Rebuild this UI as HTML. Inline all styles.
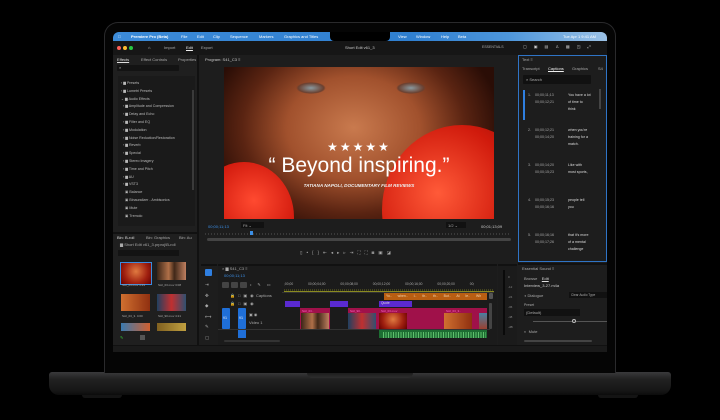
<!DOCTYPE html>
<html><head><meta charset="utf-8"><style>
*{margin:0;padding:0;box-sizing:border-box}
body{width:720px;height:420px;background:#000;position:relative;overflow:hidden;font-family:"Liberation Sans",sans-serif;color:#bbb}
.a{position:absolute}
.t{position:absolute;font-size:4px;color:#aaa;white-space:nowrap;line-height:1}
</style></head><body>
<!-- base -->
<div class="a" style="left:49px;top:372px;width:622px;height:23px;border-radius:3px 3px 10px 10px;background:linear-gradient(#3a3a3c,#222 30%,#161616 80%,#0c0c0c);"></div>
<div class="a" style="left:307px;top:372px;width:106px;height:6px;border-radius:0 0 5px 5px;background:linear-gradient(#1a1a1a,#2e2e2e)"></div>
<div class="a" style="left:82px;top:395px;width:40px;height:3px;background:#141414;border-radius:0 0 3px 3px"></div>
<div class="a" style="left:598px;top:395px;width:40px;height:3px;background:#141414;border-radius:0 0 3px 3px"></div>
<!-- lid -->
<div class="a" style="left:104px;top:22px;width:512px;height:351px;border-radius:14px 14px 0 0;background:#050505;border:1.5px solid #2a2a2c;border-bottom:none"></div>
<!-- screen -->
<div class="a" style="left:113px;top:32px;width:494px;height:320px;background:#1d1d1d;border-radius:6px 6px 0 0;overflow:hidden">
 <!-- menubar -->
 <div class="a" style="left:0;top:0;width:494px;height:9px;background:linear-gradient(90deg,#3c8bd8,#2f7fd0 60%,#4d96db 80%,#9cc2e6)"></div>
 <div class="a" style="left:217px;top:0;width:60px;height:9px;background:#000;border-radius:0 0 4px 4px"></div>
 <div class="t" style="left:5px;top:2.5px;color:#fff">&#63743;</div>
 <div class="t" style="left:18px;top:2.5px;color:#fff;font-weight:bold">Premiere Pro (Beta)</div>
 <div class="t" style="left:68px;top:2.5px;color:#fff">File</div>
 <div class="t" style="left:84px;top:2.5px;color:#fff">Edit</div>
 <div class="t" style="left:100px;top:2.5px;color:#fff">Clip</div>
 <div class="t" style="left:117px;top:2.5px;color:#fff">Sequence</div>
 <div class="t" style="left:146px;top:2.5px;color:#fff">Markers</div>
 <div class="t" style="left:171px;top:2.5px;color:#fff">Graphics and Titles</div>
 <div class="t" style="left:285px;top:2.5px;color:#fff">View</div>
 <div class="t" style="left:303px;top:2.5px;color:#fff">Window</div>
 <div class="t" style="left:328px;top:2.5px;color:#fff">Help</div>
 <div class="t" style="left:345px;top:2.5px;color:#fff">Beta</div>
 <div class="t" style="left:450px;top:2.5px;color:#fff">Tue Apr 1 9:41 AM</div>
 <!-- toolbar -->
 <div class="a" style="left:0;top:9px;width:494px;height:14px;background:#161616"></div>
 <div class="a" style="left:4px;top:14px;width:4px;height:4px;border-radius:50%;background:#ff5f57"></div>
 <div class="a" style="left:10px;top:14px;width:4px;height:4px;border-radius:50%;background:#febc2e"></div>
 <div class="a" style="left:16px;top:14px;width:4px;height:4px;border-radius:50%;background:#28c840"></div>
 <div class="t" style="left:35px;top:14px;color:#ccc">&#8962;</div>
 <div class="t" style="left:51px;top:14px">Import</div>
 <div class="t" style="left:73px;top:14px;color:#eee;text-decoration:underline">Edit</div>
 <div class="t" style="left:88px;top:14px">Export</div>
 <div class="t" style="left:232px;top:14px;color:#ccc">Short Edit v61_3</div>
 <div class="t" style="left:369px;top:14px;font-size:3.5px">ESSENTIALS</div>
 <div class="t" style="left:410px;top:13px;color:#ccc;letter-spacing:7px">▢▣▤♙▦◳⤢</div>
 <!-- left effects panel -->
 <div class="a" style="left:0;top:23px;width:86px;height:177px;background:#1f1f1f;border-right:2px solid #111"></div>
 <div class="t" style="left:4px;top:26px;color:#ddd;text-decoration:underline">Effects</div>
 <div class="t" style="left:28px;top:26px">Effect Controls</div>
 <div class="t" style="left:65px;top:26px">Properties</div>
 <div class="a" style="left:4px;top:33px;width:62px;height:6px;background:#131313;border-radius:1px"></div>
 <div class="t" style="left:6px;top:34px">⌕</div>
 <div class="a" style="left:5px;top:44px;width:77px;height:150px;background:#1a1a1a"></div>
 <div class="a" style="left:79px;top:58px;width:2px;height:100px;background:#3a3a3a"></div>
 <div class="t" style="left:8px;top:48px;line-height:7.8px;font-size:3.6px;color:#bbb">
 › ▆ Presets<br>› ▆ Lumetri Presets<br>⌄ ▆ Audio Effects<br>&nbsp;&nbsp;› ▆ Amplitude and Compression<br>&nbsp;&nbsp;› ▆ Delay and Echo<br>&nbsp;&nbsp;› ▆ Filter and EQ<br>&nbsp;&nbsp;› ▆ Modulation<br>&nbsp;&nbsp;› ▆ Noise Reduction/Restoration<br>&nbsp;&nbsp;› ▆ Reverb<br>&nbsp;&nbsp;› ▆ Special<br>&nbsp;&nbsp;› ▆ Stereo Imagery<br>&nbsp;&nbsp;› ▆ Time and Pitch<br>&nbsp;&nbsp;› ▆ AU<br>&nbsp;&nbsp;› ▆ VST3<br>&nbsp;&nbsp;&nbsp;&nbsp;▣ Balance<br>&nbsp;&nbsp;&nbsp;&nbsp;▣ Binauralizer - Ambisonics<br>&nbsp;&nbsp;&nbsp;&nbsp;▣ Mute<br>&nbsp;&nbsp;&nbsp;&nbsp;▣ Tremolo</div>
 <!-- bin panel -->
 <div class="a" style="left:0;top:200px;width:86px;height:113px;background:#1f1f1f;border-right:2px solid #111;border-top:2px solid #111"></div>
 <div class="t" style="left:4px;top:204px;color:#ddd">Bin: B-roll</div>
 <div class="t" style="left:33px;top:204px">Bin: Graphics</div>
 <div class="t" style="left:66px;top:204px">Bin: Au</div>
 <div class="t" style="left:7px;top:211px">▆ Short Edit v61_3.prproj\B-roll</div>
 <div class="a" style="left:5px;top:218px;width:61px;height:6px;background:#131313"></div>
 <div class="a" style="left:7px;top:230px;width:32px;height:23px;border:1px solid #3b8ce0;background:radial-gradient(circle at 50% 40%,#e07a40,#a02010 60%,#600)"></div>
 <div class="a" style="left:44px;top:230px;width:29px;height:18px;background:linear-gradient(90deg,#3a2518,#b07048 40%,#402818 60%,#c08060)"></div>
 <div class="t" style="left:9px;top:252px;font-size:3px">SAI_03.mov 4:29</div>
 <div class="t" style="left:45px;top:252px;font-size:3px">SAI_03.mov 3:08</div>
 <div class="a" style="left:8px;top:262px;width:29px;height:17px;background:linear-gradient(90deg,#d07030,#903010)"></div>
 <div class="a" style="left:44px;top:262px;width:29px;height:17px;background:linear-gradient(90deg,#204060,#c03030 50%,#305070)"></div>
 <div class="t" style="left:9px;top:283px;font-size:3px">SAI_03_3. 4:00</div>
 <div class="t" style="left:45px;top:283px;font-size:3px">SAI_90.mov 4:21</div>
 <div class="a" style="left:8px;top:291px;width:29px;height:8px;background:linear-gradient(90deg,#3a7ab0,#d06030)"></div>
 <div class="a" style="left:44px;top:291px;width:29px;height:8px;background:linear-gradient(90deg,#806020,#c0a040)"></div>
 <div class="t" style="left:7px;top:304px;color:#3c3">✎</div>
 <div class="a" style="left:27px;top:303px;width:5px;height:5px;background:#555"></div>
 <!-- program monitor -->
 <div class="a" style="left:88px;top:23px;width:316px;height:208px;background:#1d1d1d"></div>
 <div class="t" style="left:92px;top:26px;color:#ccc">Program: S41_C3 ≡</div>
 <div class="a" style="left:111px;top:35px;width:270px;height:152px;overflow:hidden;background:radial-gradient(ellipse 55% 75% at 48% 40%,#c97a4e,#a1512d 45%,#5a2412 75%,#2a0d06)">
  <div class="a" style="left:-30px;top:95px;width:100px;height:110px;border-radius:50%;background:radial-gradient(circle at 60% 35%,#ff4a30,#d0180c 50%,#7a0803)"></div>
  <div class="a" style="left:158px;top:58px;width:160px;height:170px;border-radius:50%;background:radial-gradient(circle at 35% 40%,#ff5a38,#d01a0c 50%,#6a0603)"></div>
  <div class="a" style="left:72px;top:15px;width:30px;height:12px;border-radius:50%;background:radial-gradient(#8a9aa0,#6a4030 60%,transparent 70%)"></div>
  <div class="a" style="left:172px;top:15px;width:30px;height:12px;border-radius:50%;background:radial-gradient(#8a9aa0,#6a4030 60%,transparent 70%)"></div>
  <div class="a" style="left:0;top:73px;width:270px;text-align:center;color:#fff;font-size:12px;letter-spacing:2px">★★★★★</div>
  <div class="a" style="left:0;top:88px;width:270px;text-align:center;color:#fff;font-size:21px;line-height:1">“ Beyond inspiring.”</div>
  <div class="a" style="left:0;top:116px;width:270px;text-align:center;color:#eee;font-size:4.6px;font-style:italic;font-weight:bold">TATIANA NAPOLI, DOCUMENTARY FILM REVIEWS</div>
  <div class="a" style="left:0;top:175px;width:270px;text-align:center;color:#fff;font-size:8.5px;text-shadow:0 0 2px #000">You have a lot of time to think</div>
 </div>
 <div class="t" style="left:95px;top:193px;color:#3c8fe6">00;00;11;13</div>
 <div class="a" style="left:128px;top:190px;width:23px;height:6px;background:#111"></div>
 <div class="t" style="left:130px;top:191.5px">Fit ⌄</div>
 <div class="a" style="left:333px;top:190px;width:20px;height:6px;background:#111"></div>
 <div class="t" style="left:335px;top:191.5px">1/2 ⌄</div>
 <div class="t" style="left:368px;top:193px;color:#ccc">00;01;13;09</div>
 <div class="a" style="left:92px;top:201px;width:306px;height:2px;background:repeating-linear-gradient(90deg,#555 0 0.5px,transparent 0.5px 3px)"></div>
 <div class="a" style="left:137px;top:199px;width:3px;height:4px;background:#3c8fe6"></div>
 <div class="a" style="left:94px;top:206px;width:304px;height:3px;background:#444;border-radius:2px"></div>
 <div class="t" style="left:187px;top:219px;color:#aaa;letter-spacing:4px;font-size:4.5px">▯•{}⇤◂▸▹⇥⛶⛶◙▣◪</div>
 <!-- right text panel -->
 <div class="a" style="left:405px;top:23px;width:89px;height:207px;background:#1d1d1d;border:1px solid #2f74c6"></div>
 <div class="t" style="left:409px;top:26px">Text ≡</div>
 <div class="t" style="left:409px;top:35px">Transcript</div>
 <div class="t" style="left:435px;top:35px;color:#eee;text-decoration:underline">Captions</div>
 <div class="t" style="left:459px;top:35px">Graphics</div>
 <div class="t" style="left:485px;top:35px">S4</div>
 <div class="a" style="left:410px;top:43px;width:68px;height:9px;background:#111;border-radius:1px"></div>
 <div class="t" style="left:413px;top:46px">⌕ Search</div>
 <div class="a" style="left:410px;top:58px;width:2px;height:30px;background:#2f7fe0"></div>
 <div class="a" style="left:486px;top:57px;width:2px;height:20px;background:#444"></div>
 <div class="t" style="left:415px;top:60px;font-size:3.6px;line-height:7px">1.<br><br><br><br><br>2.<br><br><br><br><br>3.<br><br><br><br><br>4.<br><br><br><br><br>5.</div>
 <div class="t" style="left:422px;top:60px;font-size:3.6px;line-height:7px">00;00;11;13<br>00;00;12;21<br><br><br><br>00;00;12;21<br>00;00;14;20<br><br><br><br>00;00;14;20<br>00;00;15;23<br><br><br><br>00;00;15;23<br>00;00;16;16<br><br><br><br>00;00;16;16<br>00;00;17;26</div>
 <div class="t" style="left:455px;top:60px;font-size:3.6px;line-height:7px;color:#ddd">You have a lot<br>of time to<br>think<br><br><br>when you're<br>training for a<br>match.<br><br><br>Like with<br>most sports,<br><br><br><br>people tell<br>you<br><br><br><br>that it's more<br>of a mental<br>challenge</div>
 <!-- essential sound -->
 <div class="a" style="left:405px;top:231px;width:89px;height:82px;background:#1d1d1d;border-top:2px solid #111"></div>
 <div class="t" style="left:409px;top:235px">Essential Sound ≡</div>
 <div class="t" style="left:411px;top:245px">Browse&nbsp;&nbsp;&nbsp; <u style="color:#ddd">Edit</u></div>
 <div class="t" style="left:411px;top:252px;color:#ccc">Interview_3-27.m4a</div>
 <div class="t" style="left:411px;top:262px">◖ Dialogue</div>
 <div class="a" style="left:456px;top:260px;width:38px;height:6px;background:#111"></div>
 <div class="t" style="left:458px;top:262px;font-size:3.2px">Clear Audio Type</div>
 <div class="t" style="left:411px;top:272px;font-size:3.5px">Preset</div>
 <div class="a" style="left:411px;top:277px;width:56px;height:7px;background:#111"></div>
 <div class="t" style="left:413px;top:279px">(Default) </div>
 <div class="a" style="left:420px;top:289px;width:74px;height:1px;background:#555"></div>
 <div class="a" style="left:459px;top:287px;width:4px;height:4px;border-radius:50%;border:1px solid #bbb;background:#222"></div>
 <div class="t" style="left:411px;top:298px">◐&nbsp; Mute</div>
 <div class="a" style="left:411px;top:308px;width:68px;height:2px;background:#444;border-radius:1px"></div>
 <!-- tools column -->
 <div class="a" style="left:88px;top:232px;width:16px;height:81px;background:#1d1d1d;border-top:2px solid #111"></div>
 <div class="a" style="left:92px;top:237px;width:7px;height:7px;background:#2f7fe0;border-radius:1px"></div>
 <div class="t" style="left:92px;top:248px;line-height:10.5px;font-size:4.5px;color:#aaa">⇥<br>✥<br>◆<br>⟷<br>✎<br>▢</div>
 <!-- timeline -->
 <div class="a" style="left:105px;top:232px;width:279px;height:81px;background:#1b1b1b;border-top:2px solid #111"></div>
 <div class="t" style="left:109px;top:235px">× ▆ S41_C3 ≡</div>
 <div class="t" style="left:111px;top:242px;color:#3c8fe6">00;00;11;13</div>
 <div class="a" style="left:109px;top:250px;width:7px;height:6px;background:#444;border-radius:1px"></div>
 <div class="a" style="left:118px;top:250px;width:7px;height:6px;background:#444;border-radius:1px"></div>
 <div class="a" style="left:127px;top:250px;width:7px;height:6px;background:#444;border-radius:1px"></div>
 <div class="t" style="left:137px;top:251px;letter-spacing:6px">•✎▭</div>
 <div class="t" style="left:171px;top:251px;font-size:3.3px;word-spacing:14px">;00;00 00;00;04;00 00;00;08;00 00;00;12;00 00;00;16;00 00;00;20;00 00;</div>
 <div class="a" style="left:171px;top:257px;width:210px;height:3px;background:repeating-linear-gradient(90deg,#6a6a20 0 0.5px,transparent 0.5px 2px);border-bottom:1px solid #8a8a20"></div>
 <div class="a" style="left:169px;top:260px;width:212px;height:0.5px;background:#333"></div>
 <div class="t" style="left:117px;top:262px;letter-spacing:3px">🔒□▣◉</div>
 <div class="t" style="left:143px;top:262px">Captions</div>
 <div class="a" style="left:271px;top:261px;width:103px;height:7px;background:#b85e12"></div>
 <div class="t" style="left:273px;top:263px;font-size:3.4px;color:#f3d6b0;word-spacing:5px">Yo.. when.. I.. th.. th.. But.. At le.. Wh</div>
 <div class="a" style="left:376px;top:261px;width:4px;height:6px;background:#555;border-radius:1px"></div>
 <div class="t" style="left:117px;top:270px;letter-spacing:3px">🔒□▣◉</div>
 <div class="a" style="left:172px;top:269px;width:15px;height:6px;background:#5a2ad0"></div>
 <div class="a" style="left:217px;top:269px;width:18px;height:6px;background:#5a2ad0"></div>
 <div class="a" style="left:266px;top:269px;width:33px;height:6px;background:#5a2ad0"></div>
 <div class="t" style="left:268px;top:270px;font-size:3.2px;color:#ddd">Quote</div>
 <div class="a" style="left:109px;top:276px;width:8px;height:21px;background:#1f6fd8;border-radius:1px"></div>
 <div class="a" style="left:125px;top:276px;width:8px;height:21px;background:#1f6fd8;border-radius:1px"></div>
 <div class="t" style="left:110px;top:285px;color:#fff;font-size:3.2px">V1</div>
 <div class="t" style="left:126px;top:285px;color:#fff;font-size:3.2px">V1</div>
 <div class="t" style="left:136px;top:281px">▣ ◉<br><br>Video 1</div>
 <div class="a" style="left:187px;top:276px;width:30px;height:21px;background:#a0114a"></div>
 <div class="a" style="left:188px;top:281px;width:28px;height:16px;background:linear-gradient(90deg,#3a2518,#b07048 40%,#402818 60%,#c08060)"></div>
 <div class="a" style="left:235px;top:276px;width:31px;height:21px;background:#a0114a"></div>
 <div class="a" style="left:235px;top:281px;width:28px;height:16px;background:linear-gradient(90deg,#204060,#c03030 50%,#305070)"></div>
 <div class="a" style="left:266px;top:276px;width:65px;height:21px;background:#a0114a"></div>
 <div class="a" style="left:266px;top:281px;width:28px;height:16px;background:radial-gradient(circle at 50% 40%,#e07a40,#a02010 60%,#600)"></div>
 <div class="a" style="left:331px;top:276px;width:34px;height:21px;background:#a0114a"></div>
 <div class="a" style="left:331px;top:281px;width:28px;height:16px;background:linear-gradient(90deg,#d07030,#903010)"></div>
 <div class="a" style="left:365px;top:276px;width:9px;height:21px;background:#a0114a"></div>
 <div class="a" style="left:366px;top:281px;width:8px;height:16px;background:linear-gradient(#4a7fa0,#9a4030)"></div>
 <div class="t" style="left:189px;top:277.5px;font-size:3px;color:#f6c">SAI_03..</div>
 <div class="t" style="left:237px;top:277.5px;font-size:3px;color:#f6c">SAI_90..</div>
 <div class="t" style="left:268px;top:277.5px;font-size:3px;color:#f6c">SAI_03.mov</div>
 <div class="t" style="left:333px;top:277.5px;font-size:3px;color:#f6c">SAI_03_3..</div>
 <div class="a" style="left:376px;top:271px;width:3px;height:26px;background:#444;border-radius:1px"></div>
 <div class="a" style="left:105px;top:297px;width:272px;height:1px;background:#333"></div>
 <div class="a" style="left:125px;top:298px;width:8px;height:8px;background:#1f6fd8"></div>
 <div class="a" style="left:266px;top:298px;width:108px;height:8px;background:#1d6d32"></div>
 <div class="a" style="left:270px;top:300px;width:103px;height:6px;background:repeating-linear-gradient(90deg,#6fd47a 0 1px,transparent 1px 2.5px);opacity:.8"></div>
 <div class="a" style="left:111px;top:308px;width:56px;height:2px;background:#333;border-radius:2px"></div>
 <!-- meter -->
 <div class="a" style="left:385px;top:232px;width:19px;height:81px;background:#1b1b1b;border-top:2px solid #111"></div>
 <div class="a" style="left:390px;top:238px;width:2px;height:65px;background:#0a0a0a"></div>
 <div class="t" style="left:395px;top:240px;font-size:3px;line-height:10px;color:#888">0<br>-12<br>-24<br>-36<br>-48<br>-dB</div>
 <div class="a" style="left:0;top:313px;width:494px;height:7px;background:#1a1a1a;border-top:1px solid #111"></div>
</div>
</body></html>
